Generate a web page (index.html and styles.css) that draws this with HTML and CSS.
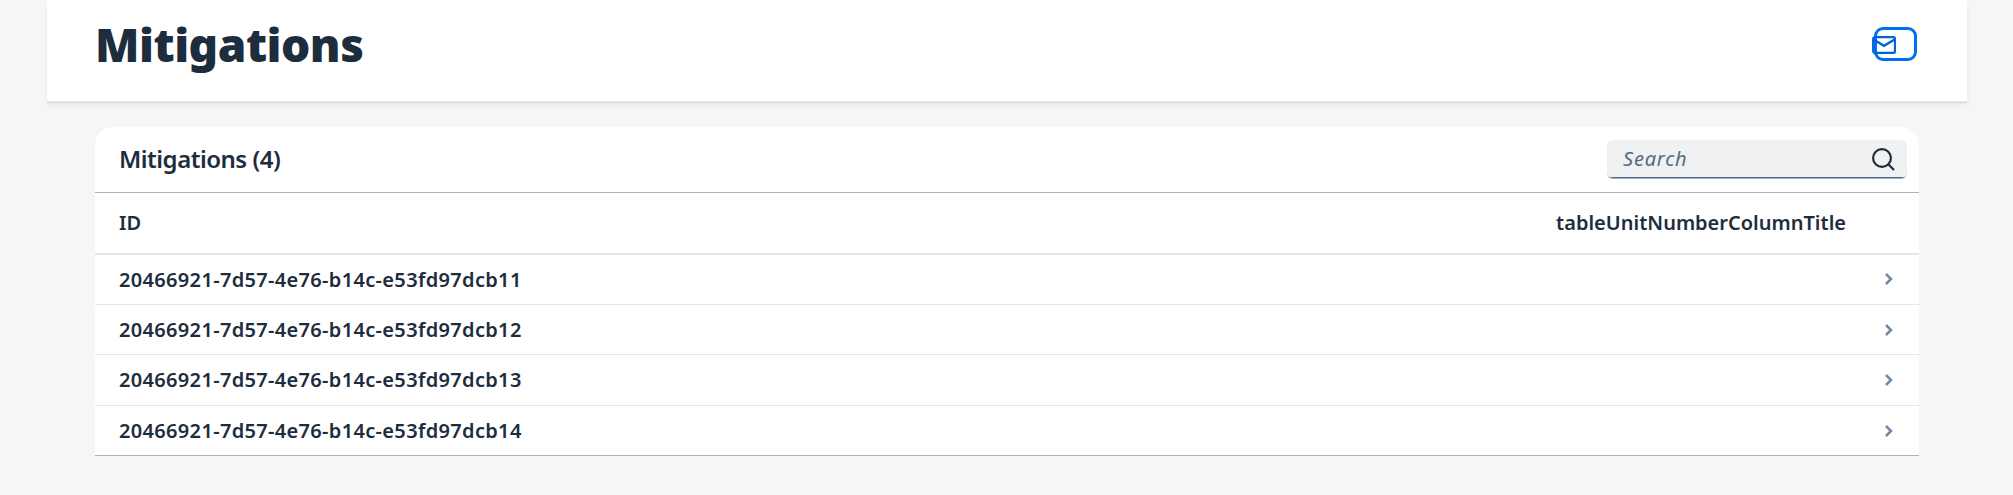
FILE: index.html
```html
<!DOCTYPE html>
<html lang="en">
<head>
<meta charset="utf-8">
<title>Mitigations</title>
<link rel="stylesheet" href="styles.css">
</head>
<body>
<header class="page-header">
  <h1 class="page-title"><span>Mitigations</span></h1>
  <button class="mail-button" aria-label="Send mail">
    <svg class="mail-icon" width="24" height="18" viewBox="0 0 24 18"><rect x="1.2" y="1.1" width="21.8" height="15.9" rx="2"/><path d="M1.5 3.5 L12 9.8 L22.5 3.5"/></svg>
  </button>
</header>
<main class="table-card">
  <div class="toolbar">
    <h2 class="table-title"><span>Mitigations (4)</span></h2>
    <div class="search"><span class="placeholder">Search</span>
      <svg class="search-icon" width="23" height="23" viewBox="0 0 23 23"><circle cx="10" cy="10" r="8.9"/><path d="M16.3 16.3 L22 22"/></svg>
    </div>
  </div>
  <div class="columns"><span class="column-id">ID</span><span class="column-unit">tableUnitNumberColumnTitle</span></div>
  <div class="row"><span class="row-id">20466921-7d57-4e76-b14c-e53fd97dcb11</span><svg class="chevron" width="8" height="12" viewBox="0 0 8 12"><path d="M1 1 L6 6 L1 11"/></svg></div>
  <div class="row"><span class="row-id">20466921-7d57-4e76-b14c-e53fd97dcb12</span><svg class="chevron lower" width="8" height="12" viewBox="0 0 8 12"><path d="M1 1 L6 6 L1 11"/></svg></div>
  <div class="row tall"><span class="row-id">20466921-7d57-4e76-b14c-e53fd97dcb13</span><svg class="chevron lower" width="8" height="12" viewBox="0 0 8 12"><path d="M1 1 L6 6 L1 11"/></svg></div>
  <div class="row last"><span class="row-id">20466921-7d57-4e76-b14c-e53fd97dcb14</span><svg class="chevron lower" width="8" height="12" viewBox="0 0 8 12"><path d="M1 1 L6 6 L1 11"/></svg></div>
</main>
</body>
</html>
```
FILE: styles.css
```css
* { box-sizing: border-box; }
body {
  margin: 0;
  height: 495px;
  overflow: hidden;
  background: #f5f6f7;
  color: #1d2d3e;
  font-family: "Noto Sans", sans-serif;
}
.page-header {
  display: flex;
  justify-content: space-between;
  height: 101px;
  margin: 0 46px 0 47px;
  padding: 0 50px 0 48px;
  background: #fff;
  box-shadow: 0 1px 0 #e9eaeb, 0 2px 0 #d6d8da, 0 4px 5px rgba(34, 53, 72, .07);
}
.page-title {
  margin: 0;
  font-size: 46px;
  font-weight: 900;
  line-height: 88px;
  letter-spacing: -.48px;
}
.mail-button {
  width: 43px;
  height: 34px;
  margin-top: 27px;
  padding: 0;
  display: flex;
  align-items: center;
  background: #fff;
  border: 3px solid #0070f2;
  border-radius: 9px;
}
.mail-icon {
  flex: none;
  margin-left: -5px;
  margin-top: 1px;
  fill: none;
  stroke: #0064d9;
  stroke-width: 2.3;
}
.table-card {
  margin: 26px 94px 0 95px;
  background: #fff;
  border-radius: 18px 18px 0 0;
}
.toolbar {
  display: flex;
  justify-content: space-between;
  height: 66px;
  padding: 13px 12px 0 24px;
  border-bottom: 1px solid #a8b3bd;
}
.table-title {
  margin: 0;
  font-size: 24px;
  font-weight: 600;
  line-height: 37px;
  letter-spacing: -.5px;
}
.search {
  display: flex;
  justify-content: space-between;
  width: 300px;
  height: 39px;
  padding: 8px 12px 0 16px;
  background: linear-gradient(#556b82, #556b82) 0 37px / 100% 1px no-repeat, #eff1f2;
  border-bottom: 1px solid #9dafbd;
  border-radius: 6px;
}
.placeholder {
  color: #556b82;
  font-size: 20px;
  font-style: italic;
  line-height: 21px;
  letter-spacing: .8px;
}
.search-icon {
  fill: none;
  stroke: #1d2d3e;
  stroke-width: 2.2;
}
.columns {
  display: flex;
  justify-content: space-between;
  height: 62px;
  padding: 0 73px 0 24px;
  border-bottom: 2px solid #e5e5e5;
  font-size: 20px;
  font-weight: 600;
  line-height: 60px;
}
.row {
  display: flex;
  justify-content: space-between;
  height: 50px;
  padding: 0 26px 0 24px;
  border-bottom: 1px solid #e5e5e5;
  font-size: 20px;
  font-weight: 600;
  line-height: 49px;
  letter-spacing: .33px;
}
.row.tall { height: 51px; }
.row.last { border-bottom-color: #a8b3bd; }
.chevron {
  margin-top: 18px;
  fill: none;
  stroke: #7089a3;
  stroke-width: 2.5;
}
.chevron.lower { margin-top: 19px; }
```
